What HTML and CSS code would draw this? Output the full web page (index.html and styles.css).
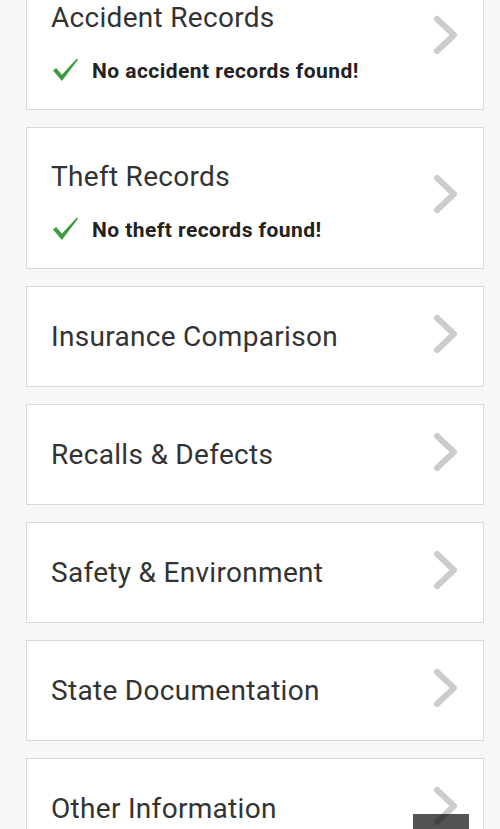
FILE: index.html
```html
<!DOCTYPE html>
<html>
<head>
<meta charset="utf-8">
<link rel="stylesheet" href="styles.css">
</head>
<body>
<div class="list">
  <a class="card tall">
    <div class="body">
      <div class="title">Accident Records</div>
      <div class="status"><svg class="check" viewBox="0 0 26 24"><path d="M1 13 L4 10.5 L9.5 17 L24 1.5 L25 2.5 L9.5 23 Z" fill="#3d9b3d"/></svg><span>No accident records found!</span></div>
    </div>
    <svg class="chev" viewBox="0 0 26 40"><path d="M4 4 L21 20 L4 36" fill="none" stroke="#cccccc" stroke-width="6" stroke-linecap="round" stroke-linejoin="round"/></svg>
  </a>
  <a class="card tall">
    <div class="body">
      <div class="title">Theft Records</div>
      <div class="status"><svg class="check" viewBox="0 0 26 24"><path d="M1 13 L4 10.5 L9.5 17 L24 1.5 L25 2.5 L9.5 23 Z" fill="#3d9b3d"/></svg><span>No theft records found!</span></div>
    </div>
    <svg class="chev" viewBox="0 0 26 40"><path d="M4 4 L21 20 L4 36" fill="none" stroke="#cccccc" stroke-width="6" stroke-linecap="round" stroke-linejoin="round"/></svg>
  </a>
  <a class="card">
    <div class="body"><div class="title">Insurance Comparison</div></div>
    <svg class="chev" viewBox="0 0 26 40"><path d="M4 4 L21 20 L4 36" fill="none" stroke="#cccccc" stroke-width="6" stroke-linecap="round" stroke-linejoin="round"/></svg>
  </a>
  <a class="card">
    <div class="body"><div class="title">Recalls &amp; Defects</div></div>
    <svg class="chev" viewBox="0 0 26 40"><path d="M4 4 L21 20 L4 36" fill="none" stroke="#cccccc" stroke-width="6" stroke-linecap="round" stroke-linejoin="round"/></svg>
  </a>
  <a class="card">
    <div class="body"><div class="title">Safety &amp; Environment</div></div>
    <svg class="chev" viewBox="0 0 26 40"><path d="M4 4 L21 20 L4 36" fill="none" stroke="#cccccc" stroke-width="6" stroke-linecap="round" stroke-linejoin="round"/></svg>
  </a>
  <a class="card">
    <div class="body"><div class="title">State Documentation</div></div>
    <svg class="chev" viewBox="0 0 26 40"><path d="M4 4 L21 20 L4 36" fill="none" stroke="#cccccc" stroke-width="6" stroke-linecap="round" stroke-linejoin="round"/></svg>
  </a>
  <a class="card">
    <div class="body"><div class="title">Other Information</div></div>
    <svg class="chev" viewBox="0 0 26 40"><path d="M4 4 L21 20 L4 36" fill="none" stroke="#cccccc" stroke-width="6" stroke-linecap="round" stroke-linejoin="round"/></svg>
  </a>
</div>
<div class="totop"></div>
</body>
</html>
```
FILE: styles.css
```css
html, body {
  margin: 0;
  padding: 0;
  background: #f7f7f7;
  height: 829px;
  overflow: hidden;
}
body {
  font-family: Roboto, "Liberation Sans", sans-serif;
  color: #333333;
}
.list {
  display: flex;
  flex-direction: column;
  gap: 17px;
  margin: -32px 16px 0 26px;
}
.card {
  display: flex;
  align-items: center;
  background: #ffffff;
  border: 1px solid #d9d9d9;
  height: 99px;
  padding: 0 24px 0 24px;
  text-decoration: none;
  color: inherit;
}
.card.tall {
  height: 140px;
}
.body {
  flex: 1;
  display: flex;
  flex-direction: column;
}
.tall .body {
  padding-top: 6px;
}
.title {
  font-size: 28px;
  letter-spacing: 0.3px;
  line-height: 32px;
  color: #333333;
}
.status {
  display: flex;
  align-items: center;
  margin-top: 23px;
  font-size: 21px;
  letter-spacing: 0.45px;
  font-weight: 700;
  color: #222222;
}
.status span {
  margin-bottom: -2px;
}
.check {
  width: 27px;
  height: 25px;
  margin-left: 1px;
  margin-right: 13px;
}
.chev {
  width: 26px;
  height: 40px;
  margin-bottom: 6px;
}
.tall .chev {
  margin-bottom: 8px;
}
.totop {
  position: fixed;
  left: 413px;
  top: 814px;
  width: 56px;
  height: 20px;
  background: rgba(0, 0, 0, 0.67);
}
```
